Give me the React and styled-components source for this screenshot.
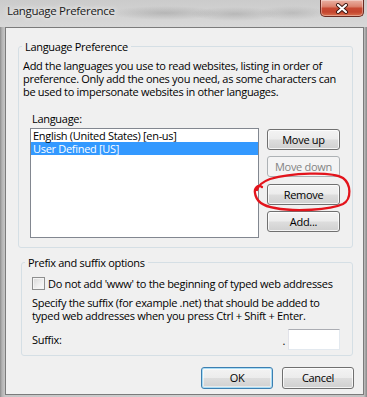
import React from 'react';
import styled, { createGlobalStyle, css } from 'styled-components';

const GlobalStyle = createGlobalStyle`
  html, body {
    margin: 0;
    padding: 0;
    background: #ffffff;
  }
  body {
    font-family: "Open Sans", "Noto Sans", sans-serif;
  }
`;

const Window = styled.div`
  position: relative;
  width: 367px;
  height: 397px;
  display: flex;
  flex-direction: column;
  overflow: hidden;
  white-space: nowrap;
  font-family: "Open Sans", "Noto Sans", sans-serif;
  font-size: 11px;
  letter-spacing: -0.3px;
  color: #000;
  background: linear-gradient(90deg, #8c8c8c 0, #b3b3b3 2px, #c6c6c6 5px, #cfcfcf 50%, #c2c2c2 calc(100% - 3px), #878787 100%);
`;

const TitleBar = styled.div`
  height: 27px;
  flex: none;
  display: flex;
  align-items: flex-start;
  background:
    radial-gradient(ellipse 55px 7px at 165px 13px, rgba(110, 110, 110, 0.28), transparent),
    radial-gradient(ellipse 45px 7px at 235px 14px, rgba(110, 110, 110, 0.26), transparent),
    radial-gradient(ellipse 35px 7px at 292px 13px, rgba(110, 110, 110, 0.22), transparent),
    linear-gradient(180deg, #cbcbcb 0%, #d3d3d3 60%, #d8d8d8 100%);
`;

const Title = styled.div`
  padding: 3px 0 0 7px;
  font-size: 11.5px;
  line-height: 15px;
  color: #1a1a1a;
  text-shadow: 0 0 4px rgba(255, 255, 255, 0.9), 0 0 8px rgba(255, 255, 255, 0.7);
`;

const CloseButton = styled.div`
  margin-left: auto;
  margin-right: 3px;
  width: 44px;
  height: 17px;
  box-sizing: border-box;
  display: flex;
  align-items: center;
  justify-content: center;
  border: 1px solid #6a2b22;
  border-top: none;
  border-radius: 0 0 5px 5px;
  background: linear-gradient(180deg, #eab1a3 0%, #dc8470 40%, #c84a33 52%, #c4452e 75%, #d9714f 100%);
  box-shadow: inset 0 0 0 1px rgba(255, 255, 255, 0.35);
`;

const Client = styled.div`
  flex: 1;
  margin: 0 3px 2px 5px;
  border: 1px solid #7b7b7b;
  background: #f0f0f0;
  display: flex;
  flex-direction: column;
`;

const Group = styled.fieldset`
  margin: ${p => p.$top}px 10px 0 ${p => p.$left}px;
  padding: 0;
  min-width: 0;
  border: 1px solid #d5dfe5;
  border-radius: 3px;
`;

const Legend = styled.legend`
  margin-left: 3px;
  padding: 0 3px;
  font-size: 11px;
  line-height: 15px;
`;

const GroupBody = styled.div`
  padding: ${p => p.$pad};
`;

const Text = styled.p`
  margin: ${p => p.$margin || '0'};
  font-size: 11px;
  line-height: 13px;
`;

const ListRow = styled.div`
  display: flex;
  align-items: flex-start;
  margin: 3px 0 0 7px;
`;

const ListBox = styled.div`
  width: 229px;
  height: 110px;
  box-sizing: border-box;
  border: 1px solid #828790;
  background: #fff;
`;

const ListItem = styled.div`
  height: 13px;
  line-height: 13px;
  padding-left: 2px;
  ${p => p.$selected && css`
    background: #3399ff;
    color: #fff;
  `}
`;

const ButtonColumn = styled.div`
  display: flex;
  flex-direction: column;
  gap: 6.5px;
  margin: 1px 0 0 8px;
`;

const Button = styled.button`
  box-sizing: border-box;
  width: ${p => p.$w || 73}px;
  height: ${p => p.$h || 21}px;
  padding: 0;
  font-family: "Open Sans", "Noto Sans", sans-serif;
  font-size: 11px;
  letter-spacing: -0.3px;
  color: #000;
  border: 1px solid #707070;
  border-radius: 3px;
  background: linear-gradient(180deg, #f3f3f3 0%, #ececec 48%, #dddddd 52%, #d0d0d0 100%);
  box-shadow: inset 0 0 0 1px rgba(255, 255, 255, 0.75);
  ${p => p.disabled && css`
    color: #838383;
    border-color: #adb2b5;
    background: #f4f4f4;
    box-shadow: none;
  `}
  ${p => p.$default && css`
    border-color: #3c7fb1;
    box-shadow: inset 0 0 0 1px #a9dcf5, inset 0 0 0 2px rgba(255, 255, 255, 0.5);
  `}
`;

const CheckRow = styled.label`
  display: flex;
  align-items: center;
  gap: 3px;
  height: 13px;
  font-size: 11px;
  line-height: 13px;
`;

const CheckBox = styled.span`
  flex: none;
  width: 13px;
  height: 13px;
  box-sizing: border-box;
  border: 1px solid #8e8f8f;
  background: linear-gradient(135deg, #d8d8d8 0%, #f0f0f0 60%, #fbfbfb 100%);
  box-shadow: inset 0 0 0 1px #f4f4f4;
`;

const SuffixRow = styled.div`
  display: flex;
  align-items: center;
  margin-top: 6.5px;
  padding-right: 12px;
`;

const Dot = styled.span`
  margin-left: auto;
  margin-right: 3px;
  line-height: 13px;
  align-self: flex-end;
  padding-bottom: 3px;
`;

const SuffixInput = styled.div`
  width: 52px;
  height: 21px;
  box-sizing: border-box;
  background: #fff;
  border: 1px solid #e3e9ef;
  border-top-color: #abadb3;
  border-left-color: #e2e3ea;
`;

const Footer = styled.div`
  display: flex;
  justify-content: flex-end;
  gap: 9px;
  margin: 11px 9px 0 0;
`;

const Scribble = styled.svg`
  position: absolute;
  left: 0;
  top: 0;
  pointer-events: none;
`;

const App = () => (
  <>
    <GlobalStyle />
    <Window>
      <TitleBar>
        <Title>Language Preference</Title>
        <CloseButton>
          <svg width="14" height="11" viewBox="0 0 14 11">
            <path d="M3 2 L11 9 M11 2 L3 9" stroke="#3b1610" strokeWidth="4" strokeLinecap="round" fill="none" />
            <path d="M3 2 L11 9 M11 2 L3 9" stroke="#ffffff" strokeWidth="2.2" strokeLinecap="round" fill="none" />
          </svg>
        </CloseButton>
      </TitleBar>
      <Client>
        <Group $top={10.5} $left={12}>
          <Legend>Language Preference</Legend>
          <GroupBody $pad="5px 0 9px 4px">
            <Text>
              Add the languages you use to read websites, listing in order of<br />
              preference. Only add the ones you need, as some characters can<br />
              be used to impersonate websites in other languages.
            </Text>
            <Text $margin="14px 0 0 9px">Language:</Text>
            <ListRow>
              <ListBox>
                <ListItem>English (United States) [en-us]</ListItem>
                <ListItem $selected>User Defined [US]</ListItem>
              </ListBox>
              <ButtonColumn>
                <Button>Move up</Button>
                <Button disabled>Move down</Button>
                <Button>Remove</Button>
                <Button>Add...</Button>
              </ButtonColumn>
            </ListRow>
          </GroupBody>
        </Group>
        <Group $top={7.5} $left={15}>
          <Legend>Prefix and suffix options</Legend>
          <GroupBody $pad="6.5px 0 5px 10px">
            <CheckRow>
              <CheckBox />
              Do not add 'www' to the beginning of typed web addresses
            </CheckRow>
            <Text $margin="6.5px 0 0 0">
              Specify the suffix (for example .net) that should be added to<br />
              typed web addresses when you press Ctrl + Shift + Enter.
            </Text>
            <SuffixRow>
              <Text>Suffix:</Text>
              <Dot>.</Dot>
              <SuffixInput />
            </SuffixRow>
          </GroupBody>
        </Group>
        <Footer>
          <Button $w={72} $h={22} $default>OK</Button>
          <Button $w={72} $h={22}>Cancel</Button>
        </Footer>
      </Client>
      <Scribble width="367" height="397" viewBox="0 0 367 397">
        <path
          d="M262 187 C258 184, 254 188, 255 193 C256 201, 262 206, 275 208 C295 212, 330 210, 343 204 C352 199, 351 184, 343 178 C332 171, 290 173, 270 179 C262 182, 258 186, 257 190"
          stroke="#e3141c"
          strokeWidth="2.3"
          strokeLinecap="round"
          fill="none"
        />
      </Scribble>
    </Window>
  </>
);

export default App;
